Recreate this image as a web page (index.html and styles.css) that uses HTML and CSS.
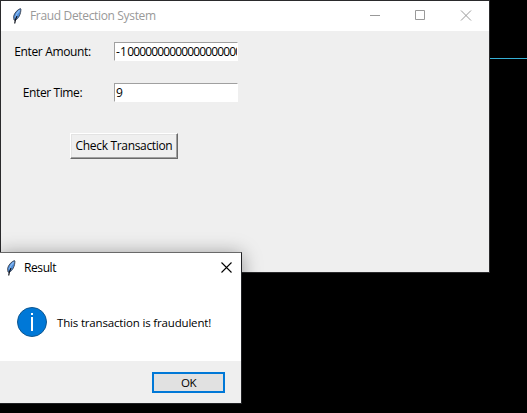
FILE: index.html
```html
<!DOCTYPE html>
<html lang="en">
<head>
<meta charset="utf-8">
<title>Fraud Detection System</title>
<link rel="stylesheet" href="styles.css">
</head>
<body>
<svg width="0" height="0" class="defs">
  <symbol id="feather" viewBox="0 0 10 16">
    <path d="M8.5.6C5.4 1.5 2.2 5.3 1.6 8.5L2 12l1.300.3C6.500 10.700 9 6 8.900 1Z" fill="#4f8fdc" stroke="#3a3f4c" stroke-width=".9"/>
    <path d="M7.700 2.200C5.500 4 4 7 3.600 9.500" fill="none" stroke="#8fbdf2" stroke-width="1.200"/>
    <path d="M5 8C4 10 3 12 2.700 15.500" fill="none" stroke="#10131c" stroke-width="1.200"/>
  </symbol>
</svg>
<div class="desktop">
  <div class="rule"></div>
  <main class="window">
    <header class="titlebar">
      <svg class="feather"><use href="#feather"/></svg>
      <span class="title">Fraud Detection System</span>
      <svg class="controls" width="102" height="12" viewBox="0 0 102 12" fill="none" stroke="#999">
        <path d="M0 6.500h10"/>
        <path d="M45.500 1.500h9v9h-9z"/>
        <path d="M91 1.500l10 10M101 1.500l-10 10"/>
      </svg>
    </header>
    <form class="form">
      <label class="label amount">Enter Amount:</label>
      <div class="entry"><span class="sign">-1</span><span class="digits">000000000000000000000</span></div>
      <label class="label time">Enter Time:</label>
      <div class="entry"><span>9</span></div>
    </form>
    <button class="check"><span>Check Transaction</span></button>
  </main>
  <section class="dialog">
    <header class="dialog-bar">
      <svg class="feather"><use href="#feather"/></svg>
      <span class="dialog-title">Result</span>
      <svg class="close" width="11" height="11" viewBox="0 0 11 11" stroke="#000" stroke-width="1.100"><path d="M.5.5l10 10M10.500.5l-10 10"/></svg>
    </header>
    <div class="message">
      <svg width="30" height="30" viewBox="0 0 30 30">
        <circle cx="15" cy="15" r="14.500" fill="#0078d7" stroke="#10578f"/>
        <path d="M14 6h2v2h-2zM14 10h2v14h-2z" fill="#fff"/>
      </svg>
      <span class="text">This transaction is fraudulent!</span>
    </div>
    <footer class="footer"><button class="ok">OK</button></footer>
  </section>
</div>
</body>
</html>
```
FILE: styles.css
```css
* { box-sizing: border-box; }
body {
  margin: 0;
  background: #000;
  font: 12px/16px "Open Sans", "Noto Sans", sans-serif;
  color: #000;
}
.defs { position: absolute; }
.desktop {
  position: relative;
  width: 527px;
  height: 413px;
  overflow: hidden;
}
.rule {
  position: absolute;
  top: 58px;
  left: 0;
  width: 527px;
  height: 1px;
  background: #36b0d5;
}
.window {
  position: absolute;
  top: 0;
  left: 0;
  width: 490px;
  height: 273px;
  border: 1px solid #2a2a2c;
  background: #efefef;
}
.titlebar {
  display: flex;
  align-items: center;
  height: 30px;
  padding: 0 17px 0 11px;
  background: #fff;
  color: #999;
}
.feather { width: 10px; height: 16px; flex: none; }
.title { margin-left: 8px; letter-spacing: -0.34px; white-space: nowrap; }
.controls { margin-left: auto; margin-top: -2px; }
.form {
  display: grid;
  grid-template-columns: 103px 124px;
  grid-template-rows: 19px 19px;
  row-gap: 22px;
  column-gap: 10px;
  padding-top: 11px;
}
.label { justify-self: center; line-height: 19px; white-space: nowrap; letter-spacing: -0.34px; }
.time { letter-spacing: -0.4px; }
.entry {
  border: 1px solid #fff;
  border-top-color: #a0a0a0;
  border-left-color: #a0a0a0;
  background: #fff;
  padding-left: 1px;
  line-height: 17px;
  overflow: hidden;
  white-space: nowrap;
}
.sign { letter-spacing: 0.2px; }
.digits { letter-spacing: -0.86px; }
.check {
  display: block;
  width: 108px;
  height: 26px;
  margin: 31px 0 0 69px;
  padding: 0;
  border: 1px solid #fff;
  border-right-color: #696969;
  border-bottom-color: #696969;
  box-shadow: inset -1px -1px #a0a0a0, inset 1px 1px #e3e3e3;
  background: #efefef;
  font: inherit;
  color: #000;
  letter-spacing: -0.33px;
  white-space: nowrap;
}
.dialog {
  position: absolute;
  top: 252px;
  left: -1px;
  width: 243px;
  height: 152px;
  border: 1px solid #202124;
  border-top-color: #696969;
  background: #fff;
  box-shadow: 0 2px 18px rgba(0, 0, 0, .38);
}
.dialog-bar {
  display: flex;
  align-items: center;
  height: 29px;
  padding: 0 9px 0 6px;
}
.dialog-title { margin-left: 8px; letter-spacing: -0.4px; }
.close { margin-left: auto; }
.message {
  display: flex;
  align-items: center;
  height: 79px;
  padding-left: 17px;
}
.text { margin: 2px 0 0 10px; font-size: 11.5px; letter-spacing: -0.17px; white-space: nowrap; }
.footer {
  display: flex;
  justify-content: flex-end;
  height: 42px;
  padding: 11px 16px 0 0;
  background: #efefef;
}
.ok {
  width: 73px;
  height: 21px;
  padding: 0;
  border: 2px solid #0078d7;
  background: #e1e1e1;
  font: 11.5px/16px "Open Sans", "Noto Sans", sans-serif;
  letter-spacing: -0.5px;
  color: #000;
}
```
